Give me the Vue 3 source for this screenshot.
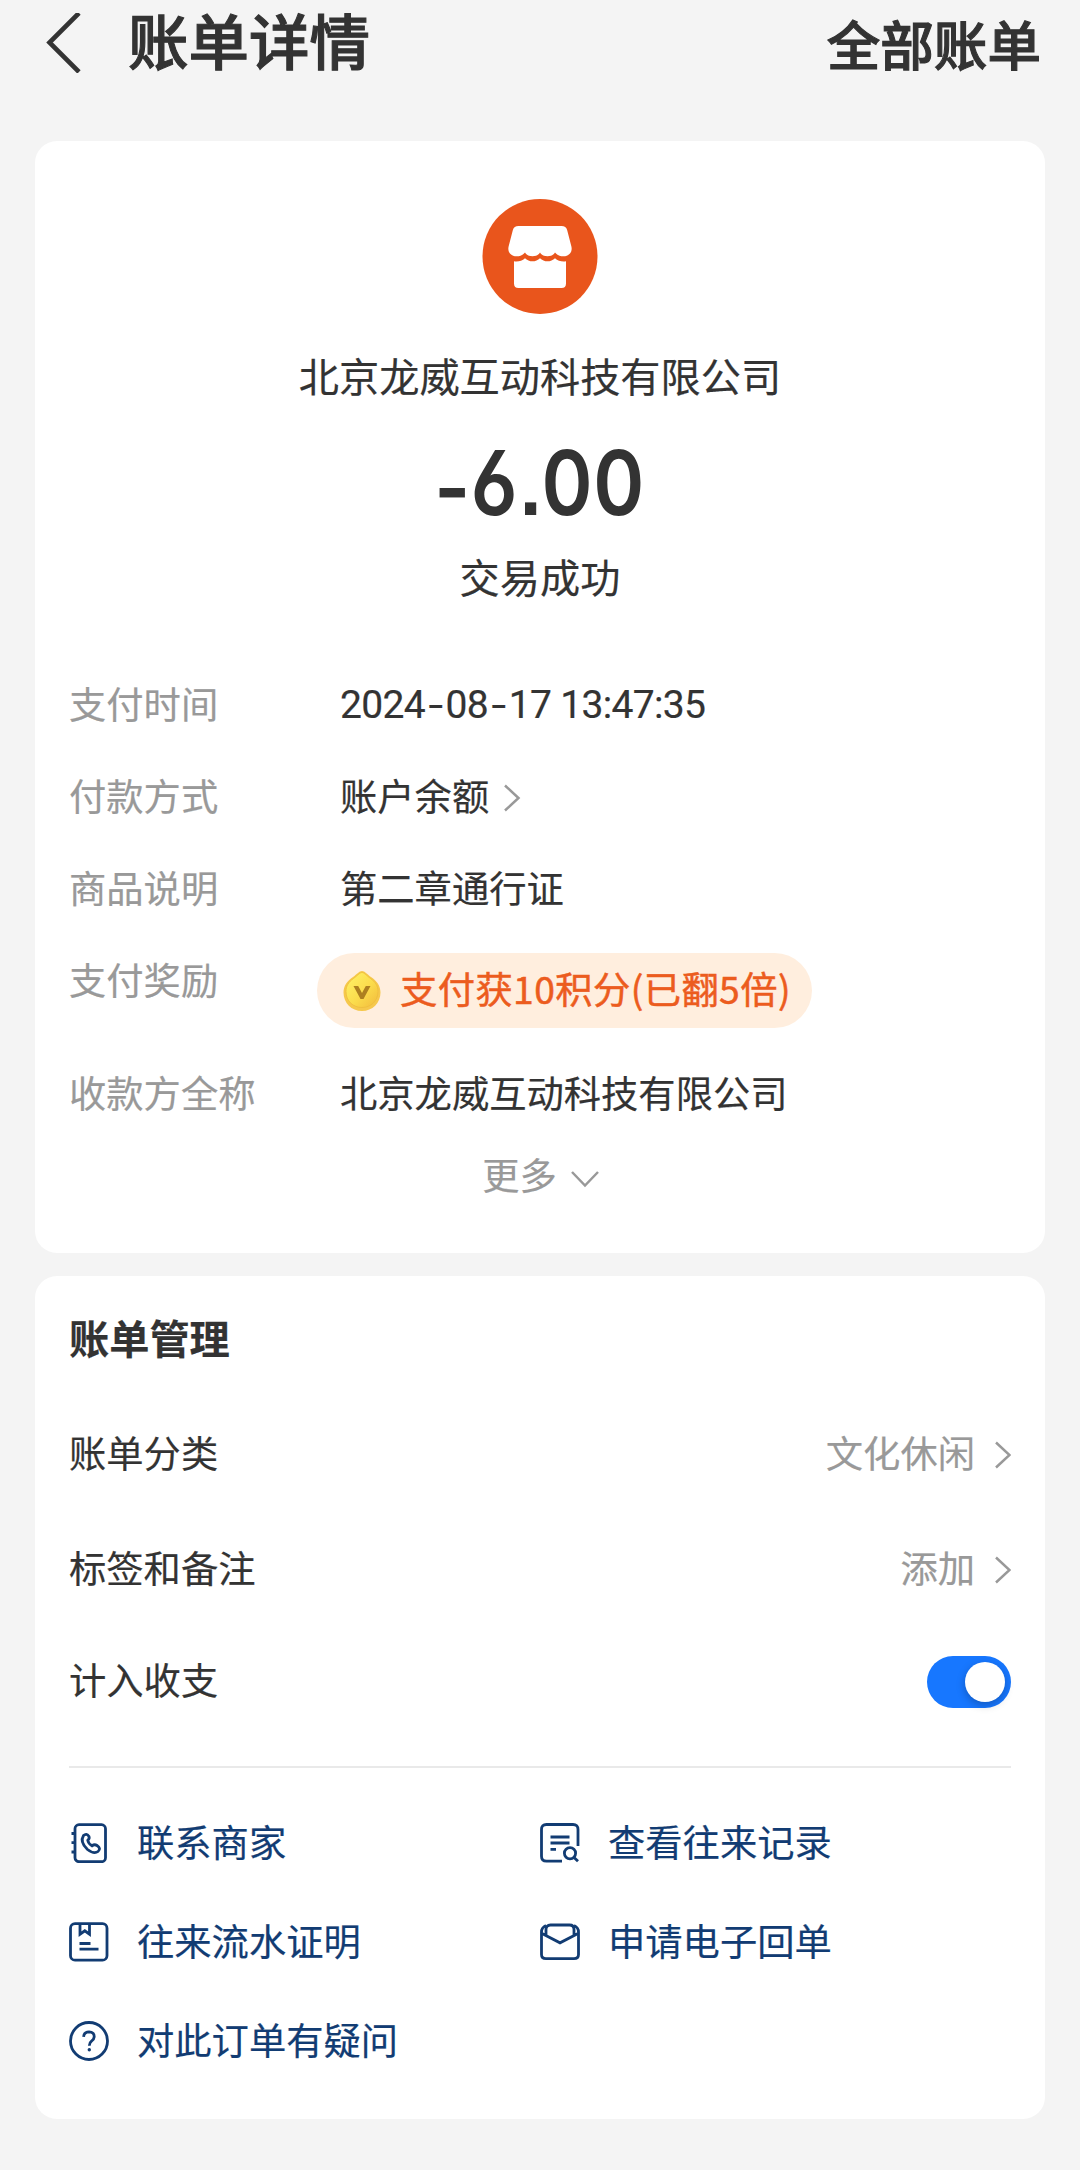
<script setup>
const manageRows = [
  { label: '账单分类', value: '文化休闲' },
  { label: '标签和备注', value: '添加' },
]
const links = [
  { icon: 'contact', text: '联系商家' },
  { icon: 'history', text: '查看往来记录' },
  { icon: 'proof', text: '往来流水证明' },
  { icon: 'receipt', text: '申请电子回单' },
  { icon: 'help', text: '对此订单有疑问' },
]
</script>

<template>
  <main class="page">
    <header class="header">
      <svg class="back" width="36" height="60" viewBox="0 0 36 60">
        <path d="M33 0 L3.500 29.500 L33 59" fill="none" stroke="#333" stroke-width="4.600" />
      </svg>
      <h1 class="title">账单详情</h1>
      <span class="all">全部账单</span>
    </header>

    <section class="card summary">
      <svg class="shop" width="116" height="116" viewBox="0 0 116 116">
        <circle cx="58" cy="57.500" r="57.500" fill="#e9551c" />
        <path
          fill="#fff"
          d="M36.500 27H79.500Q84 27 85.200 31.200L89.400 47.500C90.800 53.500 86.500 57.300 81.500 57.300C77.500 57.300 75.300 56 73 53.500C70.500 58.500 60.500 58.500 58 53.500C55.500 58.500 45.500 58.500 43 53.500C40.700 56 38.500 57.300 34.500 57.300C29.500 57.300 25.200 53.500 26.600 47.500L30.800 31.200Q32 27 36.500 27Z"
        />
        <path
          fill="#fff"
          d="M32 62.300C36.500 63 40 61.700 43 59.200C47 63.300 54 63.300 58 59.200C62 63.300 69 63.300 73 59.200C76 61.700 79.500 63 84 62.300V84.500Q84 89 79.500 89H36.500Q32 89 32 84.500Z"
        />
      </svg>
      <p class="company">北京龙威互动科技有限公司</p>
      <p class="amount"><i>-</i>6.00</p>
      <p class="status">交易成功</p>

      <dl class="details">
        <div class="row">
          <dt>支付时间</dt>
          <dd class="time">2024<i>-</i>08<i>-</i>17 13:47:35</dd>
        </div>
        <div class="row">
          <dt>付款方式</dt>
          <dd>
            账户余额
            <svg class="chev method" width="18" height="28" viewBox="0 0 18 28">
              <path d="M2 1.500 L15.500 14 L2 26.500" />
            </svg>
          </dd>
        </div>
        <div class="row">
          <dt>商品说明</dt>
          <dd>第二章通行证</dd>
        </div>
        <div class="row reward">
          <dt>支付奖励</dt>
          <dd class="pill">
            <svg width="38" height="42" viewBox="0 0 38 42">
              <defs>
                <linearGradient id="coin" x1="0" y1="0" x2="1" y2="1">
                  <stop offset="0" stop-color="#fff36a" />
                  <stop offset=".55" stop-color="#fbdc4c" />
                  <stop offset="1" stop-color="#f2ba3c" />
                </linearGradient>
              </defs>
              <path
                d="M19 1C21.500 1 24 4 28 7C34 11 37.500 16 37.500 22.500C37.500 33 29.500 41 19 41S.5 33 .5 22.500C.5 16 4 11 10 7C14 4 16.500 1 19 1Z"
                fill="#f6c84c"
              />
              <path
                d="M19 2.500C21 2.500 23.500 5.500 27.500 8.500C32.500 12 35 16 35 21.500C35 31 28 37.500 19 37.500S3 31 3 21.500C3 16 5.500 12 10.500 8.500C14.500 5.500 17 2.500 19 2.500Z"
                fill="url(#coin)"
                stroke="#eebc3c"
                stroke-width=".8"
              />
              <path d="M10.500 16H15.200L19 23L22.800 16H27.500L20.500 29H17.500Z" fill="#ad7f20" />
            </svg>
            <span>支付获10积分(已翻5倍)</span>
          </dd>
        </div>
        <div class="row">
          <dt>收款方全称</dt>
          <dd>北京龙威互动科技有限公司</dd>
        </div>
      </dl>
      <div class="more">
        更多
        <svg class="chev" width="28" height="18" viewBox="0 0 28 18">
          <path d="M1 2 L14 15.500 L27 2" />
        </svg>
      </div>
    </section>

    <section class="card manage">
      <h2>账单管理</h2>
      <div v-for="r in manageRows" :key="r.label" class="item">
        <span>{{ r.label }}</span>
        <span class="value">{{ r.value }}</span>
        <svg class="chev" width="18" height="28" viewBox="0 0 18 28">
          <path d="M3 1.500 L16.500 14 L3 26.500" />
        </svg>
      </div>
      <div class="item last">
        <span>计入收支</span>
        <span class="toggle"><b></b></span>
      </div>
      <hr />
      <nav class="links">
        <a v-for="l in links" :key="l.text">
          <svg width="40" height="40" viewBox="0 0 40 40">
            <template v-if="l.icon === 'contact'">
              <rect x="6" y="1.700" width="30.500" height="37" rx="4" />
              <path d="M2.500 10.500H7M2.500 19.700H7M2.500 29H7" />
              <path
                d="M14.500 12.500Q17.500 9.800 19.800 13.200Q21 15.500 18.800 17.400Q19.300 20.500 23 22.800Q25.500 20.800 28 22.500Q32.500 25.500 29 28.500Q25 31.500 18.500 26.500Q10.500 19 14.500 12.500Z"
              />
            </template>
            <template v-else-if="l.icon === 'history'">
              <path d="M38 23V6.500Q38 1.500 33 1.500H6.500Q1.500 1.500 1.500 6.500V33.200Q1.500 38.200 6.500 38.200H22" />
              <path d="M10.500 14H29.500M10.500 20H29.500M10.500 26.300H16" />
              <circle cx="30" cy="30.300" r="5.600" />
              <path d="M34 34.500L38 38.300" />
            </template>
            <template v-else-if="l.icon === 'proof'">
              <rect x="1.500" y="1.700" width="36.500" height="36.500" rx="4.500" />
              <path d="M11 2V12.200L15.800 8.800L20.500 12.200V2M10.500 21.500H21.500M10.500 27.200H29.500" />
            </template>
            <template v-else-if="l.icon === 'receipt'">
              <path d="M6 3.500Q1.500 5.500 1.500 10V32.500Q1.500 36.700 6 36.700H34Q38.500 36.700 38.500 32.500V10Q38.500 5.500 34 3.500" />
              <path d="M2 11.500L20 20.800L38 11.500M6 13V7.500Q6 3 10.500 3H29.500Q34 3 34 7.500V13" />
            </template>
            <template v-else>
              <circle cx="20" cy="20" r="18.500" />
              <path d="M14.600 15.800Q15 10.800 20 10.800Q25.400 11 25.200 15.800Q25 18.500 22.500 20.200Q20.300 21.800 20.300 24.800" />
              <circle cx="20.300" cy="28.800" r="1.700" class="dot" />
            </template>
          </svg>
          <span>{{ l.text }}</span>
        </a>
      </nav>
    </section>
  </main>
</template>

<style>
body {
  background: #f4f4f4;
}
</style>

<style scoped>
.page {
  box-sizing: border-box;
  width: 1080px;
  height: 2170px;
  padding: 0 35px;
  background: #f4f4f4;
  color: #333;
  font: 400 37.3px 'Noto Sans CJK SC', sans-serif;
  -webkit-text-stroke: 0.2px currentColor;
}
h1, h2, p, dl, dd {
  margin: 0;
}
.header {
  display: flex;
  align-items: flex-start;
  height: 141px;
  -webkit-text-stroke: 1.1px currentColor;
}
.back {
  margin: 13px 0 0 11px;
}
.title {
  margin-left: 46px;
  font-size: 60.500px;
  font-weight: 500;
  line-height: 77px;
}
.all {
  margin-left: auto;
  margin-right: 4px;
  font-size: 53.600px;
  font-weight: 500;
  line-height: 85px;
}
.card {
  box-sizing: border-box;
  background: #fff;
  border-radius: 22px;
}
.summary {
  display: flex;
  flex-direction: column;
  align-items: center;
  height: 1112px;
  padding: 58px 34px 0;
}
.shop {
  display: block;
}
.company {
  margin-top: 30px;
  font-size: 40.200px;
  line-height: 60px;
}
.amount {
  margin-top: 28px;
  font: 600 90px/100px Inter, sans-serif;
  font-feature-settings: 'cv03', 'ss07';
  letter-spacing: 0.8px;
  -webkit-text-stroke: 0;
  transform: scaleX(0.86);
}
.amount i {
  position: relative;
  top: 5px;
  font-style: normal;
}
.status {
  margin-top: 13px;
  font-size: 40.200px;
  line-height: 60px;
}
.details {
  align-self: stretch;
  margin-top: 50px;
  padding-top: 1px;
}
.row {
  display: flex;
  height: 92px;
  line-height: 92px;
}
dt {
  width: 271px;
  color: #999;
}
dd {
  display: flex;
  align-items: center;
}
.time {
  padding-top: 5px;
  font-family: Roboto, sans-serif;
  font-size: 39px;
  line-height: 87px;
  letter-spacing: -0.65px;
  white-space: pre;
}
.time i {
  display: inline-block;
  width: 20.500px;
  font-style: normal;
  text-align: center;
  transform: scaleX(1.35);
}
.chev {
  fill: none;
  stroke: #999;
  stroke-width: 2.500;
}
.method {
  margin: 5px 0 0 14px;
}
.reward {
  height: 113px;
}
.pill {
  box-sizing: border-box;
  width: 495px;
  height: 75px;
  margin: 20px 0 0 -23px;
  padding-left: 26px;
  border-radius: 38px;
  background: #ffeede;
  color: #ec5c1e;
  line-height: 71px;
  letter-spacing: 0.4px;
}
.pill span {
  margin: -5px 0 0 19px;
  -webkit-text-stroke-width: 0.5px;
}
.more {
  display: flex;
  align-items: center;
  height: 72px;
  padding-left: 1px;
  color: #999;
}
.more .chev {
  margin: 9px 0 0 14px;
}
.manage {
  height: 843px;
  margin-top: 23px;
  padding: 31px 34px 0;
}
h2 {
  margin-bottom: 27px;
  font-size: 40.200px;
  font-weight: 700;
  line-height: 60px;
}
.item {
  display: flex;
  align-items: center;
  height: 115px;
}
.item.last {
  height: 109px;
}
.value {
  margin-left: auto;
  color: #999;
}
.item .chev {
  margin: 6px 0 0 18px;
}
.toggle {
  box-sizing: border-box;
  display: flex;
  justify-content: flex-end;
  width: 84px;
  height: 52px;
  margin: 6px 0 0 auto;
  padding: 6px;
  border-radius: 26px;
  background: #1777ff;
}
.toggle b {
  width: 40px;
  height: 40px;
  border-radius: 50%;
  background: #fff;
  box-shadow: 0 3px 8px rgba(0, 0, 0, 0.25);
}
hr {
  height: 2px;
  margin: 33px 0 23px;
  border: 0;
  background: #e9e9e9;
}
.links {
  display: grid;
  grid-template-columns: 471px 1fr;
  grid-auto-rows: 99px;
}
.links a {
  display: flex;
  align-items: center;
  gap: 28px;
  color: #123c73;
}
.links svg {
  margin-top: 5px;
  fill: none;
  stroke: #123c73;
  stroke-width: 2.800;
}
.links .dot {
  fill: #123c73;
  stroke: none;
}
</style>
